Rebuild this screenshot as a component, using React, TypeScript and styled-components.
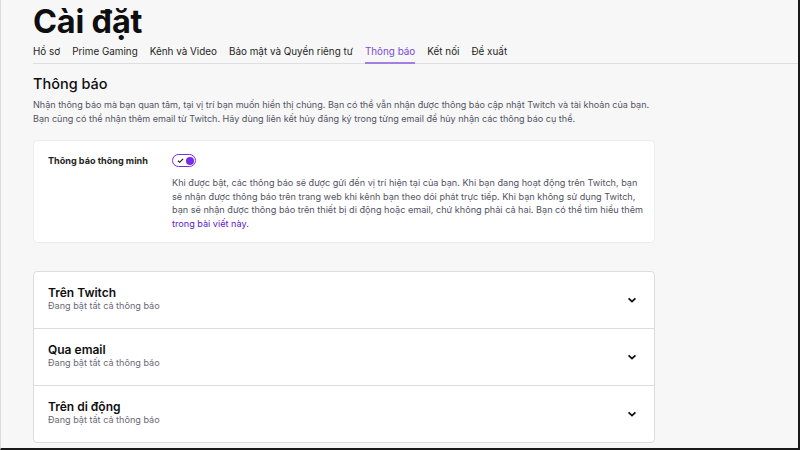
import React, { FC } from "react";
import styled, { createGlobalStyle } from "styled-components";

const GlobalStyle = createGlobalStyle`
  html, body {
    margin: 0;
    padding: 0;
    background: #f7f7f8;
  }
  * {
    box-sizing: border-box;
  }
`;

const tabs = [
  "Hồ sơ",
  "Prime Gaming",
  "Kênh và Video",
  "Bảo mật và Quyền riêng tư",
  "Thông báo",
  "Kết nối",
  "Đề xuất",
];

const channels = ["Trên Twitch", "Qua email", "Trên di động"];

const Chevron: FC = () => (
  <svg width="12" height="12" viewBox="0 0 12 12">
    <path d="M2.6 4.4 6 7.6 9.4 4.4" fill="none" stroke="#0e0e10" strokeWidth="1.8" />
  </svg>
);

const App: FC = () => (
  <>
    <GlobalStyle />
    <Root>
      <Title>Cài đặt</Title>
      <TabBar>
        {tabs.map((tab) => (
          <Tab key={tab} active={tab === "Thông báo"}>
            {tab}
          </Tab>
        ))}
      </TabBar>
      <Content>
        <SectionTitle>Thông báo</SectionTitle>
        <Intro>
          Nhận thông báo mà bạn quan tâm, tại vị trí bạn muốn hiển thị chúng. Bạn có thể vẫn nhận được
          thông báo cập nhật Twitch và tài khoản của bạn.
          <br />
          Bạn cũng có thể nhận thêm email từ Twitch. Hãy dùng liên kết hủy đăng ký trong từng email để
          hủy nhận các thông báo cụ thể.
        </Intro>
        <SmartCard>
          <SmartLabel>Thông báo thông minh</SmartLabel>
          <SmartBody>
            <Toggle>
              <svg width="7" height="7" viewBox="0 0 9 9">
                <path d="M1.3 4.8 3.4 6.8 7.8 2.3" fill="none" stroke="#0e0e10" strokeWidth="1.4" />
              </svg>
              <Knob />
            </Toggle>
            <SmartText>
              Khi được bật, các thông báo sẽ được gửi đến vị trí hiện tại của bạn. Khi bạn đang hoạt
              động trên Twitch, bạn
              <br />
              sẽ nhận được thông báo trên trang web khi kênh bạn theo dõi phát trực tiếp. Khi bạn
              không sử dụng Twitch,
              <br />
              bạn sẽ nhận được thông báo trên thiết bị di động hoặc email, chứ không phải cả hai. Bạn
              có thể tìm hiểu thêm
              <br />
              <Link href="#">trong bài viết này</Link>.
            </SmartText>
          </SmartBody>
        </SmartCard>
        <Accordion>
          {channels.map((name) => (
            <Row key={name}>
              <RowText>
                <RowTitle>{name}</RowTitle>
                <RowSub>Đang bật tất cả thông báo</RowSub>
              </RowText>
              <Chevron />
            </Row>
          ))}
        </Accordion>
      </Content>
    </Root>
  </>
);

export default App;

const Root = styled.div`
  width: 800px;
  height: 450px;
  overflow: hidden;
  padding-left: 32px;
  background: #f7f7f8;
  border-left: 1px solid #dcdcdc;
  border-right: 2px solid #1a1a1a;
  border-bottom: 2px solid #1a1a1a;
  font-family: Inter, "Noto Sans", sans-serif;
  color: #0e0e10;
`;
const Title = styled.h1`
  margin: 0;
  padding-top: 4px;
  font-size: 32.5px;
  font-weight: 700;
  line-height: 36px;
  letter-spacing: -0.2px;
`;
const TabBar = styled.div`
  display: flex;
  gap: 12px;
  margin-top: 2px;
  border-bottom: 1px solid #dedee3;
`;
const Tab = styled.div<{ active?: boolean }>`
  font-size: 9.9px;
  line-height: 13px;
  padding: 3px 0 4px;
  color: ${({ active }) => (active ? "#7c4bd6" : "#1f1f23")};
  border-bottom: 2px solid ${({ active }) => (active ? "#a27fe0" : "transparent")};
  margin-bottom: -1px;
`;
const Content = styled.div`
  width: 622px;
`;
const SectionTitle = styled.h2`
  margin: 10px 0 0;
  font-size: 14.5px;
  font-weight: 500;
  line-height: 20px;
`;
const Intro = styled.p`
  margin: 4px 0 0;
  font-size: 9.05px;
  line-height: 14px;
  color: #53535f;
  white-space: nowrap;
`;
const SmartCard = styled.div`
  display: flex;
  margin-top: 14px;
  padding: 13px 14px 12px;
  background: #fff;
  border: 1px solid #ececef;
  border-radius: 4px;
`;
const SmartLabel = styled.div`
  width: 124px;
  flex-shrink: 0;
  font-size: 9.1px;
  font-weight: 700;
  line-height: 14px;
  color: #1f1f23;
`;
const SmartBody = styled.div`
  flex: 1;
`;
const Toggle = styled.div`
  display: flex;
  align-items: center;
  justify-content: space-between;
  width: 24px;
  height: 13px;
  padding: 0 1.5px 0 4px;
  border: 1.5px solid #772ce8;
  border-radius: 7px;
  background: #fff;
`;
const Knob = styled.div`
  width: 8px;
  height: 8px;
  border-radius: 50%;
  background: #772ce8;
`;
const SmartText = styled.p`
  margin: 9px 0 0;
  font-size: 9.15px;
  line-height: 13.5px;
  color: #53535f;
  white-space: nowrap;
`;
const Link = styled.a`
  color: #5c16c5;
  text-decoration: none;
`;
const Accordion = styled.div`
  margin-top: 28px;
  background: #fff;
  border: 1px solid #dcdce0;
  border-radius: 4px;
`;
const Row = styled.div`
  display: flex;
  align-items: center;
  justify-content: space-between;
  height: 56px;
  padding: 0 16px 0 14px;
  & + & {
    border-top: 1px solid #dcdce0;
    height: 57px;
  }
`;
const RowText = styled.div`
  display: flex;
  flex-direction: column;
  margin-top: -3px;
`;
const RowTitle = styled.div`
  font-size: 12px;
  font-weight: 600;
  line-height: 15px;
`;
const RowSub = styled.div`
  font-size: 9.1px;
  line-height: 12px;
  color: #6a6a75;
`;
